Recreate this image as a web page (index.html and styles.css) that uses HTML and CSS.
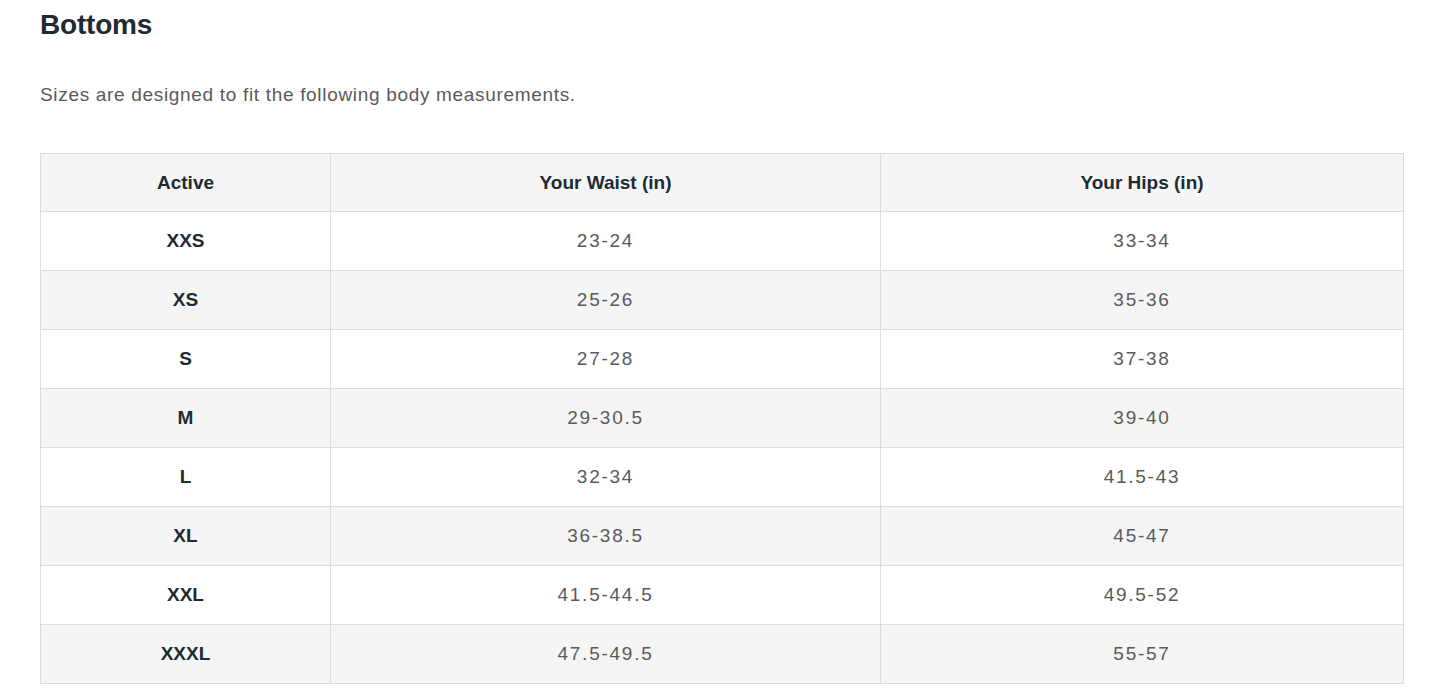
FILE: index.html
```html
<!DOCTYPE html>
<html>
<head>
<meta charset="utf-8">
<link rel="stylesheet" href="styles.css">
</head>
<body>
<main class="page">
  <h2 class="title">Bottoms</h2>
  <p class="intro">Sizes are designed to fit the following body measurements.</p>
  <table class="size-table">
    <thead>
      <tr><th class="c1">Active</th><th class="c2">Your Waist (in)</th><th class="c3">Your Hips (in)</th></tr>
    </thead>
    <tbody>
      <tr><th>XXS</th><td>23-24</td><td>33-34</td></tr>
      <tr><th>XS</th><td>25-26</td><td>35-36</td></tr>
      <tr><th>S</th><td>27-28</td><td>37-38</td></tr>
      <tr><th>M</th><td>29-30.5</td><td>39-40</td></tr>
      <tr><th>L</th><td>32-34</td><td>41.5-43</td></tr>
      <tr><th>XL</th><td>36-38.5</td><td>45-47</td></tr>
      <tr><th>XXL</th><td>41.5-44.5</td><td>49.5-52</td></tr>
      <tr><th>XXXL</th><td>47.5-49.5</td><td>55-57</td></tr>
    </tbody>
  </table>
</main>
</body>
</html>
```

FILE: styles.css
```css
html, body { margin: 0; padding: 0; background: #fff; }
body { font-family: "Liberation Sans", Arial, sans-serif; }
.page { padding: 0 41px 0 40px; }
.title {
  margin: 0;
  padding-top: 7px;
  font-size: 28px;
  line-height: 36px;
  font-weight: 700;
  color: #1f2b33;
  letter-spacing: -0.2px;
}
.intro {
  margin: 40px 0 0;
  font-size: 19px;
  line-height: 24px;
  color: #5a5a5a;
  letter-spacing: 0.68px;
}
.size-table {
  margin-top: 46px;
  width: 1364px;
  border-collapse: collapse;
  table-layout: fixed;
}
.size-table th, .size-table td {
  border: 1px solid #dcdcdc;
  height: 58px;
  padding: 0;
  text-align: center;
  vertical-align: middle;
  font-size: 19px;
}
.size-table thead th { height: 57px; }
.size-table th {
  font-weight: 700;
  color: #1f2b33;
  letter-spacing: 0;
}
.size-table td {
  color: #5a5a5a;
  letter-spacing: 1.75px;
}
.size-table .c1 { width: 289px; }
.size-table .c2 { width: 549px; }
.size-table thead tr { background: #f5f5f5; }
.size-table tbody tr:nth-child(even) { background: #f5f5f5; }
```
